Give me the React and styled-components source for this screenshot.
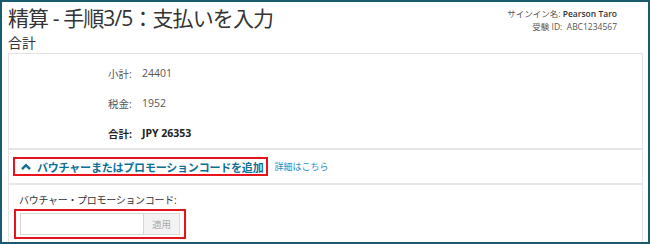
import React from 'react';
import styled, { createGlobalStyle } from 'styled-components';

const GlobalStyle = createGlobalStyle`
    html, body {
        margin: 0;
        padding: 0;
        background: #fff;
    }
    body {
        font-family: "Open Sans", "Noto Sans CJK JP", sans-serif;
        color: #333;
    }
`;

const totals = [
    { label: '小計:', value: '24401' },
    { label: '税金:', value: '1952' },
    { label: '合計:', value: 'JPY 26353', strong: true },
];

function ChevronUp() {
    return (
        <svg width="10" height="8" viewBox="0 0 10 8">
            <path d="M1 6.2 L5 2.2 L9 6.2" fill="none" stroke="#0e6f96" strokeWidth="2.4" />
        </svg>
    );
}

export default function App() {
    return (
        <>
            <GlobalStyle />
            <Frame>
                <Header>
                    <div>
                        <Title>精算 - 手順3/5：支払いを入力</Title>
                        <SubTitle>合計</SubTitle>
                    </div>
                    <UserInfo>
                        <div>サインイン名: <b>Pearson Taro</b></div>
                        <div>受験 ID:&nbsp; ABC1234567</div>
                    </UserInfo>
                </Header>

                <Panel>
                    <Totals>
                        {totals.map((t) => (
                            <TotalRow key={t.label} $strong={t.strong}>
                                <span>{t.label}</span>
                                <span>{t.value}</span>
                            </TotalRow>
                        ))}
                    </Totals>

                    <VoucherBar>
                        <Highlight>
                            <Toggle>
                                <ChevronUp />
                                バウチャーまたはプロモーションコードを追加
                            </Toggle>
                        </Highlight>
                        <Details>詳細はこちら</Details>
                    </VoucherBar>

                    <VoucherForm>
                        <FieldLabel>バウチャー・プロモーションコード:</FieldLabel>
                        <Highlight $pad="2px 4px 2px 4px">
                            <InputRow>
                                <CodeInput />
                                <ApplyButton>適用</ApplyButton>
                            </InputRow>
                        </Highlight>
                    </VoucherForm>
                </Panel>
            </Frame>
        </>
    );
}

const Frame = styled.div`
    width: 650px;
    height: 244px;
    box-sizing: border-box;
    border: 2px solid #185a6e;
    padding: 0 5px 0 6px;
    overflow: hidden;
`;

const Header = styled.div`
    display: flex;
    justify-content: space-between;
    align-items: flex-start;
    height: 51px;
`;

const Title = styled.h1`
    margin: 4px 0 0;
    font-size: 21px;
    font-weight: 400;
    line-height: 24px;
    color: #333;
    letter-spacing: -0.9px;
`;

const SubTitle = styled.div`
    margin-top: 4px;
    font-size: 14px;
    line-height: 17px;
    color: #333;
`;

const UserInfo = styled.div`
    margin-top: 5px;
    margin-right: 26px;
    font-size: 8.5px;
    line-height: 13px;
    text-align: right;
    color: #555;

    b {
        font-weight: 600;
        color: #333;
    }
`;

const Panel = styled.div`
    border: 1px solid #e2e2e2;
    height: 260px;
`;

const Totals = styled.div`
    padding: 4px 0 0 99px;
    height: 90px;
    border-bottom: 2px solid #e6e6e6;
`;

const TotalRow = styled.div`
    display: grid;
    grid-template-columns: 34px auto;
    height: 30px;
    align-items: center;
    font-size: 10.5px;
    color: ${(p) => (p.$strong ? '#222' : '#555')};
    font-weight: ${(p) => (p.$strong ? 700 : 400)};
`;

const VoucherBar = styled.div`
    display: flex;
    align-items: center;
    gap: 6px;
    height: 33px;
    padding-left: 4px;
    border-bottom: 2px solid #e6e6e6;
`;

const Highlight = styled.div`
    border: 2px solid #e8141b;
    padding: ${(p) => p.$pad || '0 3px'};
    display: inline-flex;
    align-items: center;
`;

const Toggle = styled.div`
    display: flex;
    align-items: center;
    gap: 6px;
    height: 15px;
    padding-left: 3px;
    font-size: 11px;
    font-weight: 700;
    color: #0e6f96;
    letter-spacing: -0.2px;
`;

const Details = styled.span`
    font-size: 9px;
    color: #2a8fbf;
`;

const VoucherForm = styled.div`
    padding: 8px 0 0 5px;
`;

const FieldLabel = styled.div`
    font-size: 10px;
    line-height: 14px;
    color: #333;
    padding-left: 5px;
    margin-bottom: 2px;
    letter-spacing: -0.3px;
`;

const InputRow = styled.div`
    display: flex;
`;

const CodeInput = styled.input`
    width: 124px;
    height: 22px;
    box-sizing: border-box;
    border: 1px solid #d6d6d6;
    padding: 0 4px;
    outline: none;
`;

const ApplyButton = styled.button`
    width: 36px;
    height: 22px;
    box-sizing: border-box;
    border: 1px solid #dcdcdc;
    border-left: none;
    background: #f3f3f3;
    color: #aaa;
    font-family: "Open Sans", "Noto Sans CJK JP", sans-serif;
    font-size: 9.5px;
    padding: 0;
`;
